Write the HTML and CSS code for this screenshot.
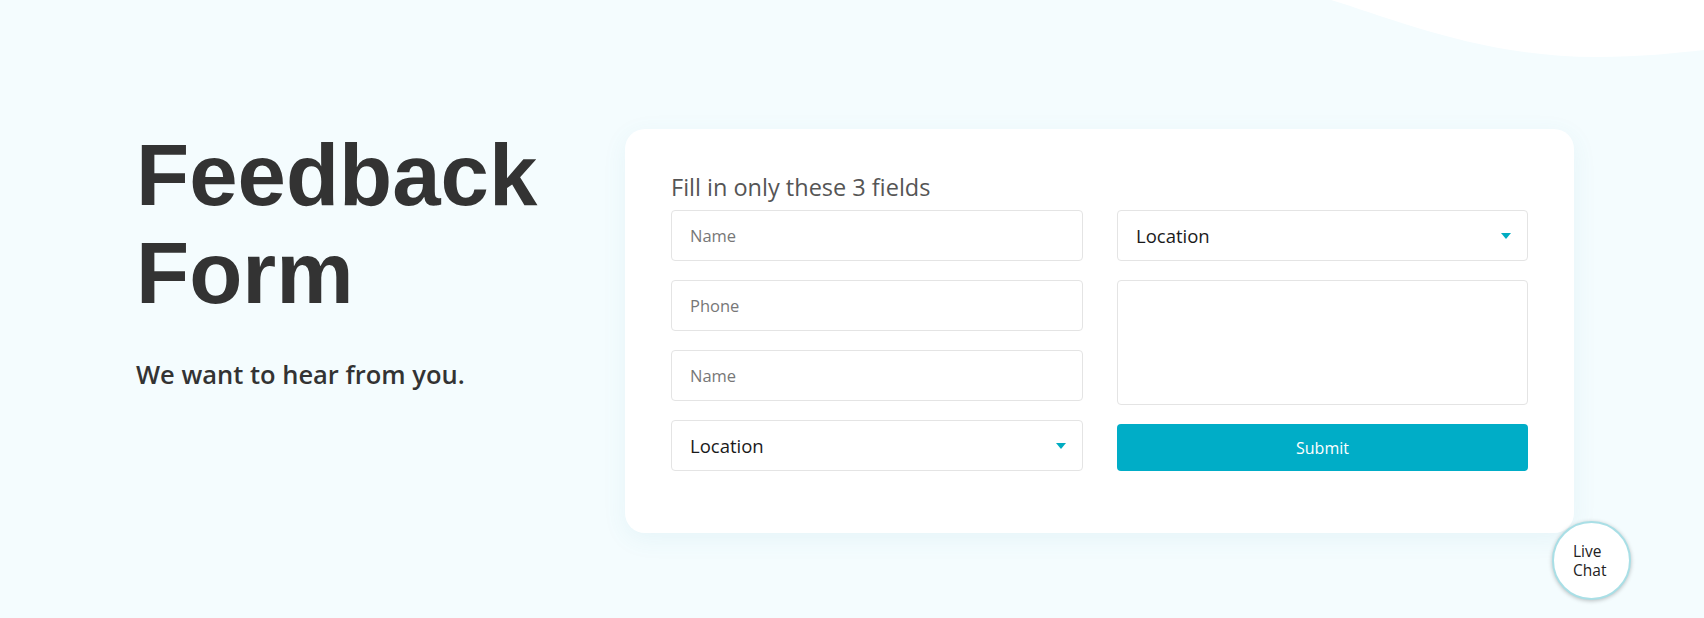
FILE: index.html
```html
<!DOCTYPE html>
<html lang="en">
<head>
<meta charset="utf-8">
<title>Feedback Form</title>
<link rel="stylesheet" href="styles.css">
</head>
<body>
<svg class="wave" viewBox="0 0 373 60" preserveAspectRatio="none" aria-hidden="true">
  <path d="M0,0 C60,18 150,57 266,57 C310,57 345,53 373,50 L373,0 Z" fill="#ffffff"/>
</svg>
<main class="page">
  <section class="intro">
    <h1 class="title">Feedback<br>Form</h1>
    <p class="tagline">We want to hear from you.</p>
  </section>
  <section class="card">
    <h2 class="card-title">Fill in only these 3 fields</h2>
    <form class="form-grid">
      <div class="col">
        <input class="field" type="text" placeholder="Name">
        <input class="field" type="text" placeholder="Phone">
        <input class="field" type="text" placeholder="Name">
        <div class="select">
          <span class="select-label">Location</span>
          <span class="caret"></span>
        </div>
      </div>
      <div class="col">
        <div class="select">
          <span class="select-label">Location</span>
          <span class="caret"></span>
        </div>
        <textarea class="field area"></textarea>
        <button class="submit" type="button">Submit</button>
      </div>
    </form>
  </section>
</main>
<button class="chat" type="button">Live<br>Chat</button>
</body>
</html>
```
FILE: styles.css
```css
* { box-sizing: border-box; }
html, body { margin: 0; padding: 0; }
body {
  background: #f4fcfe;
  font-family: "Open Sans", "Noto Sans", sans-serif;
  color: #333;
  width: 1704px;
  height: 618px;
  overflow: hidden;
  position: relative;
}
.wave {
  position: absolute;
  top: 0;
  right: 0;
  width: 373px;
  height: 60px;
}
.page {
  display: flex;
  align-items: flex-start;
  padding: 126px 0 0 136px;
}
.intro {
  width: 489px;
  flex: none;
}
.title {
  margin: 0;
  font-family: "Liberation Sans", Arial, sans-serif;
  font-size: 87px;
  line-height: 98px;
  font-weight: 700;
  color: #333;
}
.tagline {
  margin: 36px 0 0;
  font-size: 25.5px;
  line-height: 33px;
  font-weight: 600;
  color: #333;
}
.card {
  margin-top: 3px;
  width: 949px;
  height: 404px;
  background: #fff;
  border-radius: 20px;
  padding: 43px 46px 62px;
  box-shadow: 0 6px 24px rgba(60, 150, 180, 0.08);
}
.card-title {
  margin: 0 0 8px;
  font-size: 23.5px;
  line-height: 30px;
  font-weight: 400;
  color: #555;
}
.form-grid {
  display: grid;
  grid-template-columns: 412px 411px;
  column-gap: 34px;
}
.col {
  display: flex;
  flex-direction: column;
  gap: 19px;
}
.field {
  display: block;
  width: 100%;
  height: 51px;
  border: 1px solid #e4e4e4;
  border-radius: 4px;
  padding: 0 18px;
  font-family: inherit;
  font-size: 16.5px;
  color: #333;
  background: #fff;
  outline: none;
}
.field::placeholder { color: #777; }
.area {
  height: 125px;
  resize: none;
}
.select {
  position: relative;
  height: 51px;
  border: 1px solid #e4e4e4;
  border-radius: 4px;
  padding: 0 18px;
  display: flex;
  align-items: center;
  justify-content: space-between;
  background: #fff;
}
.select-label {
  font-size: 18.5px;
  color: #1a1a1a;
}
.caret {
  width: 0;
  height: 0;
  border-left: 5px solid transparent;
  border-right: 5px solid transparent;
  border-top: 6px solid #00acc1;
  margin-right: -2px;
}
.submit {
  display: block;
  width: 100%;
  height: 47px;
  border: 0;
  border-radius: 4px;
  background: #00adc7;
  color: #fff;
  font-family: inherit;
  font-size: 16px;
}
.chat {
  position: absolute;
  left: 1552px;
  top: 521px;
  width: 79px;
  height: 79px;
  border-radius: 50%;
  background: #fff;
  border: 2px solid #a9dfe6;
  box-shadow: 0 1px 4px rgba(0, 0, 0, 0.25);
  font-family: inherit;
  font-size: 15.5px;
  line-height: 19px;
  color: #222;
  text-align: left;
  padding: 0 0 0 19px;
}
```
